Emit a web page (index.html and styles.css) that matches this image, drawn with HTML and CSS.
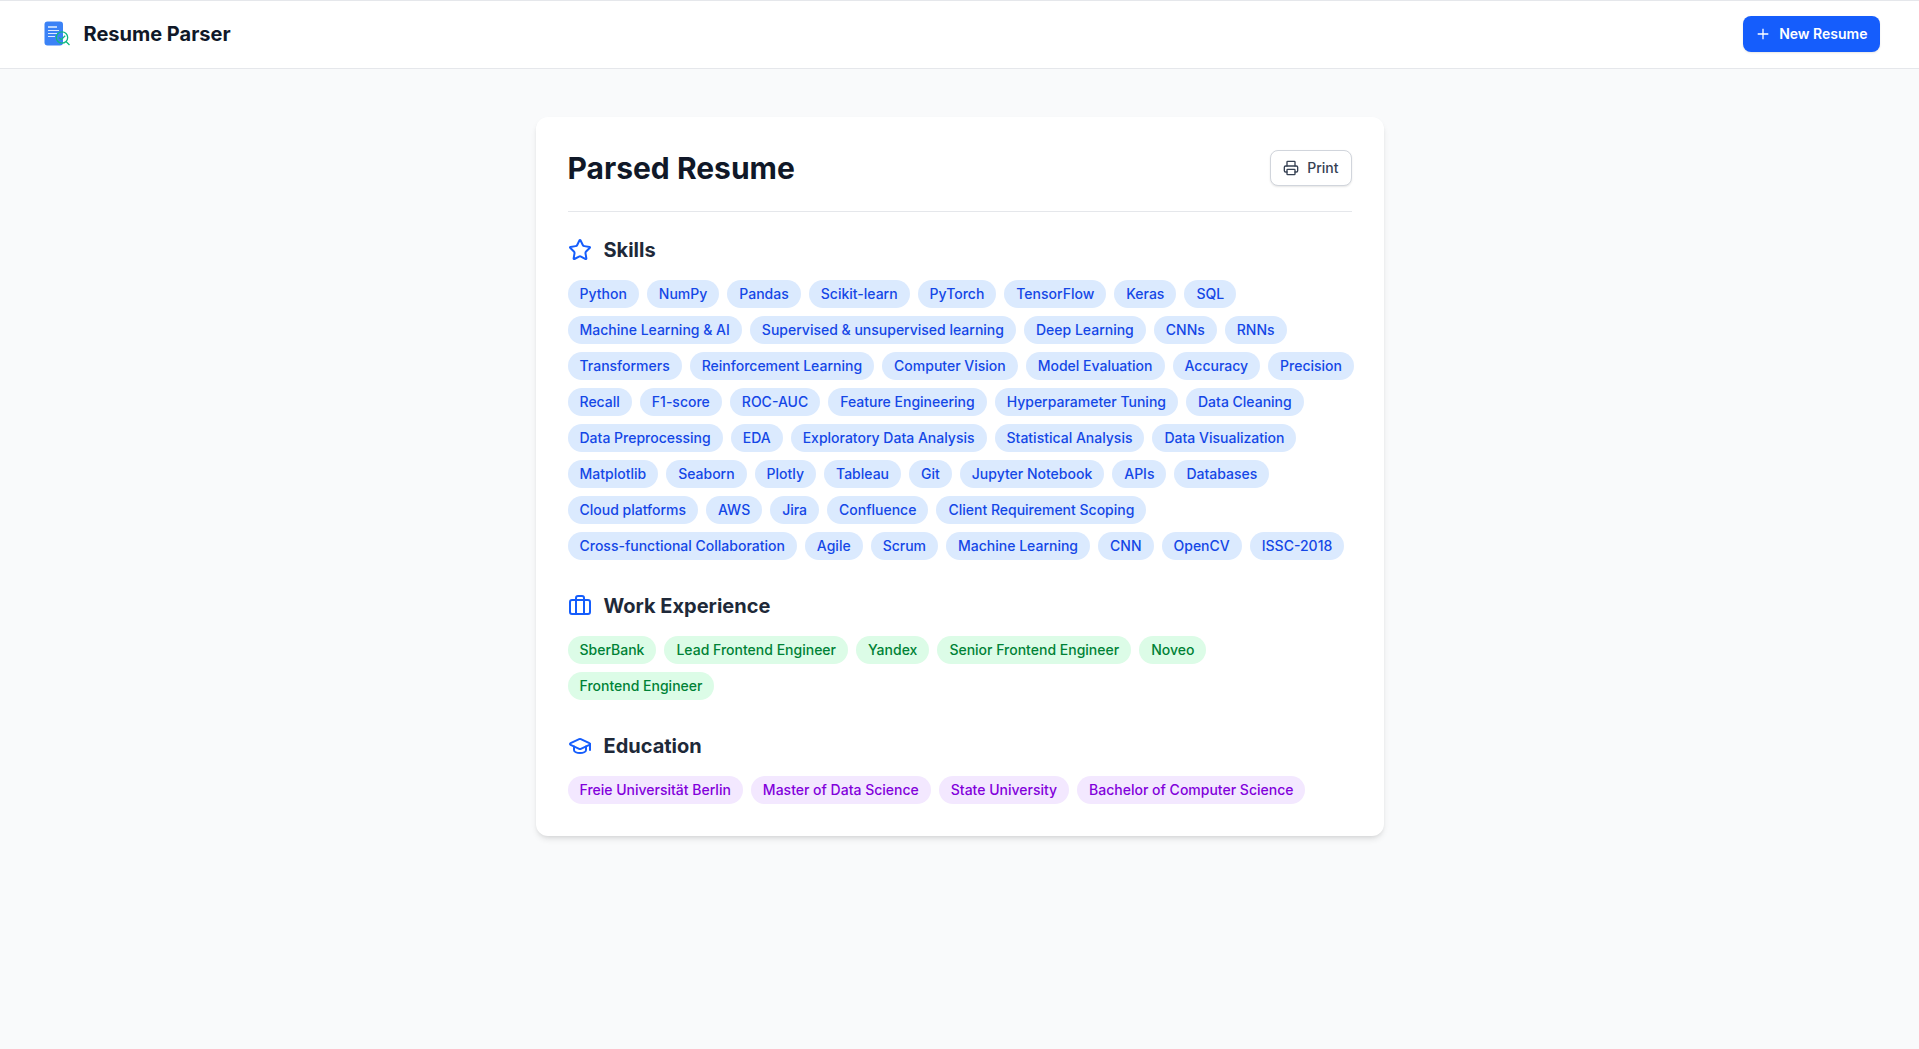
FILE: index.html
```html
<!DOCTYPE html>
<html lang="en">
<head>
<meta charset="utf-8">
<meta name="viewport" content="width=device-width, initial-scale=1">
<title>Resume Parser</title>
<link rel="stylesheet" href="styles.css">
</head>
<body>
<header class="site-header">
  <div class="site-header-inner">
    <a class="brand" href="#">
      <svg class="brand-logo" viewBox="0 0 32 32" fill="none" aria-hidden="true">
        <rect x="4.500" y="3.500" width="18.500" height="24" rx="3" fill="#3b82f6"/>
        <path d="M8 9h9" stroke="#dbeafe" stroke-width="2" opacity=".8"/>
        <path d="M8 12.500h11M8 15.500h9M8 18.500h7" stroke="#dbeafe" stroke-width="1.200"/>
        <circle cx="22" cy="19.500" r="5.700" stroke="#10b981" stroke-width="1.300"/>
        <path d="M26 23.500l3.500 3.500M19 19.500l2.200 2.200 4-4" stroke="#10b981" stroke-width="1.300"/>
      </svg>
      <span class="brand-name">Resume Parser</span>
    </a>
    <button class="button button-primary" type="button">
      <svg class="button-icon" viewBox="0 0 16 16" fill="none" stroke="currentColor" stroke-width="1.300" aria-hidden="true"><path d="M8 2.700v10.600M2.700 8h10.600"/></svg>
      New Resume
    </button>
  </div>
</header>
<main class="page">
  <article class="card">
    <div class="card-header">
      <h1 class="card-title">Parsed Resume</h1>
      <button class="button button-outline" type="button">
        <svg class="button-icon" viewBox="0 0 24 24" fill="none" stroke="currentColor" stroke-width="2" stroke-linecap="round" stroke-linejoin="round" aria-hidden="true"><path d="M6 18H4a2 2 0 0 1-2-2v-5a2 2 0 0 1 2-2h16a2 2 0 0 1 2 2v5a2 2 0 0 1-2 2h-2"/><path d="M6 9V3a1 1 0 0 1 1-1h10a1 1 0 0 1 1 1v6"/><rect x="6" y="14" width="12" height="8" rx="1"/></svg>
        Print
      </button>
    </div>
    <section class="section">
      <h2 class="section-title">
        <svg class="section-icon" viewBox="0 0 24 24" aria-hidden="true"><path d="M11.525 2.295a.53.53 0 0 1 .95 0l2.310 4.679a2.123 2.123 0 0 0 1.595 1.160l5.166.756a.53.53 0 0 1 .294.904l-3.736 3.638a2.123 2.123 0 0 0-.611 1.878l.882 5.140a.53.53 0 0 1-.771.560l-4.618-2.428a2.122 2.122 0 0 0-1.973 0L6.396 21.010a.53.53 0 0 1-.770-.560l.881-5.139a2.122 2.122 0 0 0-.611-1.879L2.160 9.795a.53.53 0 0 1 .294-.906l5.165-.755a2.122 2.122 0 0 0 1.597-1.160z"/></svg>
        Skills
      </h2>
      <ul class="tags tags-blue">
        <li>Python</li><li>NumPy</li><li>Pandas</li><li>Scikit-learn</li><li>PyTorch</li><li>TensorFlow</li><li>Keras</li><li>SQL</li>
        <li>Machine Learning &amp; AI</li><li>Supervised &amp; unsupervised learning</li><li>Deep Learning</li><li>CNNs</li><li>RNNs</li>
        <li>Transformers</li><li>Reinforcement Learning</li><li>Computer Vision</li><li>Model Evaluation</li><li>Accuracy</li><li>Precision</li>
        <li>Recall</li><li>F1-score</li><li>ROC-AUC</li><li>Feature Engineering</li><li>Hyperparameter Tuning</li><li>Data Cleaning</li>
        <li>Data Preprocessing</li><li>EDA</li><li>Exploratory Data Analysis</li><li>Statistical Analysis</li><li>Data Visualization</li>
        <li>Matplotlib</li><li>Seaborn</li><li>Plotly</li><li>Tableau</li><li>Git</li><li>Jupyter Notebook</li><li>APIs</li><li>Databases</li>
        <li>Cloud platforms</li><li>AWS</li><li>Jira</li><li>Confluence</li><li>Client Requirement Scoping</li>
        <li>Cross-functional Collaboration</li><li>Agile</li><li>Scrum</li><li>Machine Learning</li><li>CNN</li><li>OpenCV</li><li>ISSC-2018</li>
      </ul>
    </section>
    <section class="section">
      <h2 class="section-title">
        <svg class="section-icon" viewBox="0 0 24 24" aria-hidden="true"><path d="M16 20V4a2 2 0 0 0-2-2h-4a2 2 0 0 0-2 2v16"/><rect x="2" y="6" width="20" height="14" rx="2"/></svg>
        Work Experience
      </h2>
      <ul class="tags tags-green">
        <li>SberBank</li><li>Lead Frontend Engineer</li><li>Yandex</li><li>Senior Frontend Engineer</li><li>Noveo</li><li>Frontend Engineer</li>
      </ul>
    </section>
    <section class="section">
      <h2 class="section-title">
        <svg class="section-icon" viewBox="0 0 24 24" aria-hidden="true"><path d="M21.420 10.922a1 1 0 0 0-.019-1.838L12.830 5.180a2 2 0 0 0-1.660 0L2.600 9.080a1 1 0 0 0 0 1.832l8.570 3.908a2 2 0 0 0 1.660 0z"/><path d="M22 10v6"/><path d="M6 12.500V16a6 3 0 0 0 12 0v-3.500"/></svg>
        Education
      </h2>
      <ul class="tags tags-purple">
        <li>Freie Universität Berlin</li><li>Master of Data Science</li><li>State University</li><li>Bachelor of Computer Science</li>
      </ul>
    </section>
  </article>
</main>
</body>
</html>
```
FILE: styles.css
```css
* {
  box-sizing: border-box;
  margin: 0;
  padding: 0;
}

body {
  background: #f9fafb;
  color: #101828;
  font-family: Inter, "Liberation Sans", sans-serif;
  font-size: 14px;
  line-height: 20px;
}

.site-header {
  padding: 15px 24px 16px;
  background: #fff;
  border-top: 1px solid #e5e7eb;
  border-bottom: 1px solid #e5e7eb;
}

.site-header-inner {
  display: flex;
  align-items: center;
  justify-content: space-between;
  max-width: 1840px;
  margin: 0 auto;
}

.brand {
  display: flex;
  align-items: center;
  gap: 12px;
  color: inherit;
  text-decoration: none;
}

.brand-logo {
  width: 32px;
  height: 32px;
}

.brand-name {
  font-size: 20px;
  font-weight: 700;
  line-height: 28px;
}

.button {
  display: flex;
  align-items: center;
  gap: 8px;
  height: 36px;
  padding: 0 12px;
  border: 0;
  border-radius: 8px;
  font: inherit;
  box-shadow: 0 1px 2px rgb(0 0 0 / 10%);
  cursor: pointer;
}

.button-icon {
  width: 16px;
  height: 16px;
}

.button-primary {
  background: #155dfc;
  color: #fff;
  font-weight: 600;
}

.button-outline {
  border: 1px solid #d1d5dc;
  background: #fff;
  color: #364153;
  font-weight: 500;
}

.page {
  padding: 48px 24px;
}

.card {
  max-width: 848px;
  margin: 0 auto;
  padding: 32px;
  border-radius: 12px;
  background: #fff;
  box-shadow: 0 4px 6px -1px rgb(0 0 0 / 10%), 0 2px 4px -2px rgb(0 0 0 / 10%);
}

.card-header {
  display: flex;
  align-items: center;
  justify-content: space-between;
  margin-bottom: 24px;
  padding-bottom: 24px;
  border-bottom: 1px solid #e5e7eb;
}

.card-title {
  font-size: 30px;
  font-weight: 700;
  line-height: 38px;
}

.section + .section {
  margin-top: 32px;
}

.section-title {
  display: flex;
  align-items: center;
  gap: 12px;
  margin-bottom: 16px;
  color: #1e2939;
  font-size: 20px;
  font-weight: 700;
  line-height: 28px;
}

.section-icon {
  width: 24px;
  height: 24px;
  fill: none;
  stroke: #155dfc;
  stroke-width: 2;
  stroke-linecap: round;
  stroke-linejoin: round;
}

.tags {
  display: flex;
  flex-wrap: wrap;
  gap: 8px;
  margin-right: -4px;
  list-style: none;
}

.tags li {
  padding: 4px 12px;
  border-radius: 14px;
  font-weight: 500;
}

.tags-blue li {
  background: #dbeafe;
  color: #1447e6;
}

.tags-green li {
  background: #dcfce7;
  color: #008236;
}

.tags-purple li {
  background: #f3e8ff;
  color: #8200db;
}
```
